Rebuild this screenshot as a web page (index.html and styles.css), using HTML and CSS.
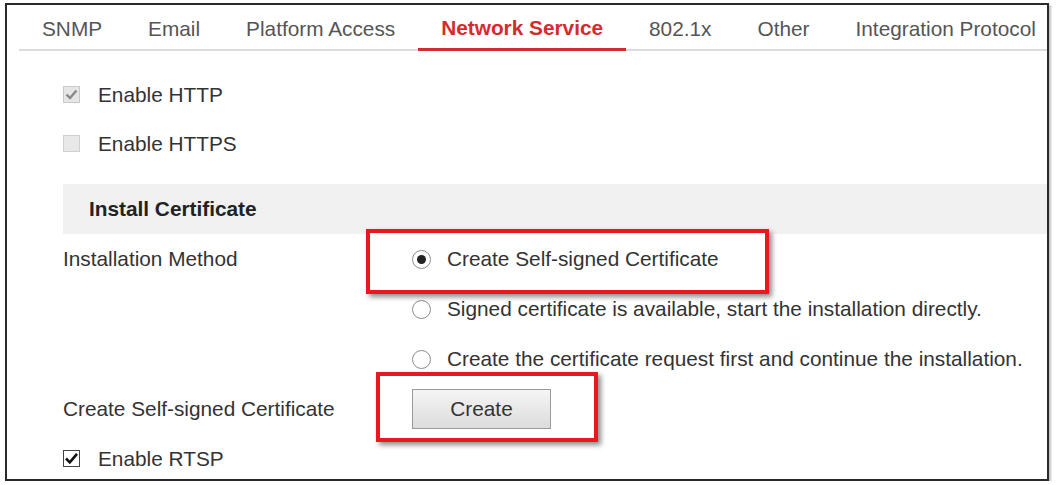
FILE: index.html
```html
<!DOCTYPE html>
<html>
<head>
<meta charset="utf-8">
<link rel="stylesheet" href="styles.css">
</head>
<body>
<div class="frame">
  <nav class="tabs">
    <span class="tab">SNMP</span>
    <span class="tab">Email</span>
    <span class="tab">Platform Access</span>
    <span class="tab active">Network Service</span>
    <span class="tab">802.1x</span>
    <span class="tab">Other</span>
    <span class="tab">Integration Protocol</span>
  </nav>
  <div class="content">
    <div class="check-row">
      <span class="cb cb-disabled-checked"><svg viewBox="0 0 17 17" width="17" height="17"><path d="M3.5 8.5 L7 12 L13.5 4.5" fill="none" stroke="#8a8a8a" stroke-width="2.4"/></svg></span>
      <span class="label">Enable HTTP</span>
    </div>
    <div class="check-row">
      <span class="cb cb-disabled"></span>
      <span class="label">Enable HTTPS</span>
    </div>
    <div class="band">Install Certificate</div>
    <div class="form-row">
      <div class="field-label">Installation Method</div>
      <div class="radio-opt"><span class="radio checked"></span><span>Create Self-signed Certificate</span></div>
    </div>
    <div class="form-row">
      <div class="field-label"></div>
      <div class="radio-opt"><span class="radio"></span><span>Signed certificate is available, start the installation directly.</span></div>
    </div>
    <div class="form-row">
      <div class="field-label"></div>
      <div class="radio-opt"><span class="radio"></span><span>Create the certificate request first and continue the installation.</span></div>
    </div>
    <div class="form-row">
      <div class="field-label">Create Self-signed Certificate</div>
      <button class="btn">Create</button>
    </div>
    <div class="check-row">
      <span class="cb cb-checked"><svg viewBox="0 0 17 17" width="17" height="17"><path d="M3 8.5 L6.8 12.3 L14 3.8" fill="none" stroke="#111" stroke-width="2.6"/></svg></span>
      <span class="label">Enable RTSP</span>
    </div>
  </div>
  <div class="mark mark-radio"></div>
  <div class="mark mark-btn"></div>
</div>
</body>
</html>
```

FILE: styles.css
```css
html, body {
  margin: 0;
  padding: 0;
  background: #fff;
}
body {
  font-family: "Liberation Sans", Arial, sans-serif;
  color: #333;
  font-size: 20.8px;
}
.frame {
  position: relative;
  margin: 3px 0 0 5px;
  width: 1040px;
  height: 474px;
  border: 2px solid #2a2a2a;
  box-shadow: 2px 2px 2px rgba(0,0,0,0.25);
  overflow: hidden;
  background: #fff;
}
.tabs {
  display: flex;
  margin-left: 12px;
  border-bottom: 2px solid #dcdcdc;
  height: 44px;
}
.tab {
  padding: 0 23px;
  line-height: 48px;
  height: 44px;
  color: #555;
  white-space: nowrap;
}
.tab.active {
  color: #d42b30;
  font-weight: bold;
  box-shadow: inset 0 -3px 0 #d42b30;
  height: 46px;
  line-height: 46px;
}
.content {
  padding: 19px 0 0 56px;
}
.check-row {
  display: flex;
  align-items: center;
  height: 49px;
}
.cb {
  width: 17px;
  height: 17px;
  box-sizing: border-box;
  display: inline-flex;
  margin-right: 18px;
  position: relative;
}
.cb svg {
  position: absolute;
  left: -1px;
  top: -1px;
}
.cb-disabled-checked {
  border: 1px solid #c9c9c9;
  background: #e6e6e6;
}
.cb-disabled {
  border: 1px solid #d0d0d0;
  background: #e8e8e8;
}
.cb-checked {
  border: 1px solid #444;
  background: #fff;
}
.band {
  margin-top: 16px;
  height: 50px;
  line-height: 50px;
  background: #f1f1f1;
  padding-left: 26px;
  font-weight: bold;
  color: #222;
}
.form-row {
  display: flex;
  align-items: center;
  height: 50px;
}
.field-label {
  width: 349px;
  flex: none;
}
.radio-opt {
  display: flex;
  align-items: center;
  white-space: nowrap;
}
.radio {
  width: 19px;
  height: 19px;
  box-sizing: border-box;
  border: 1px solid #8c8c8c;
  border-radius: 50%;
  margin-right: 16px;
  position: relative;
  flex: none;
  background: #fff;
}
.radio.checked::after {
  content: "";
  position: absolute;
  left: 4px;
  top: 4px;
  width: 9px;
  height: 9px;
  border-radius: 50%;
  background: #222;
}
.btn {
  width: 139px;
  height: 40px;
  border: 1px solid #9a9a9a;
  background: linear-gradient(#f5f5f5, #dcdcdc);
  font-family: inherit;
  font-size: 20.8px;
  color: #333;
  padding: 0;
  border-radius: 0;
}
.mark {
  position: absolute;
  border: 4px solid #e81820;
  box-shadow: 3px 3px 5px rgba(0,0,0,0.45);
  box-sizing: border-box;
}
.mark-radio {
  left: 359px;
  top: 224px;
  width: 403px;
  height: 65px;
}
.mark-btn {
  left: 369px;
  top: 367px;
  width: 222px;
  height: 70px;
}
```
